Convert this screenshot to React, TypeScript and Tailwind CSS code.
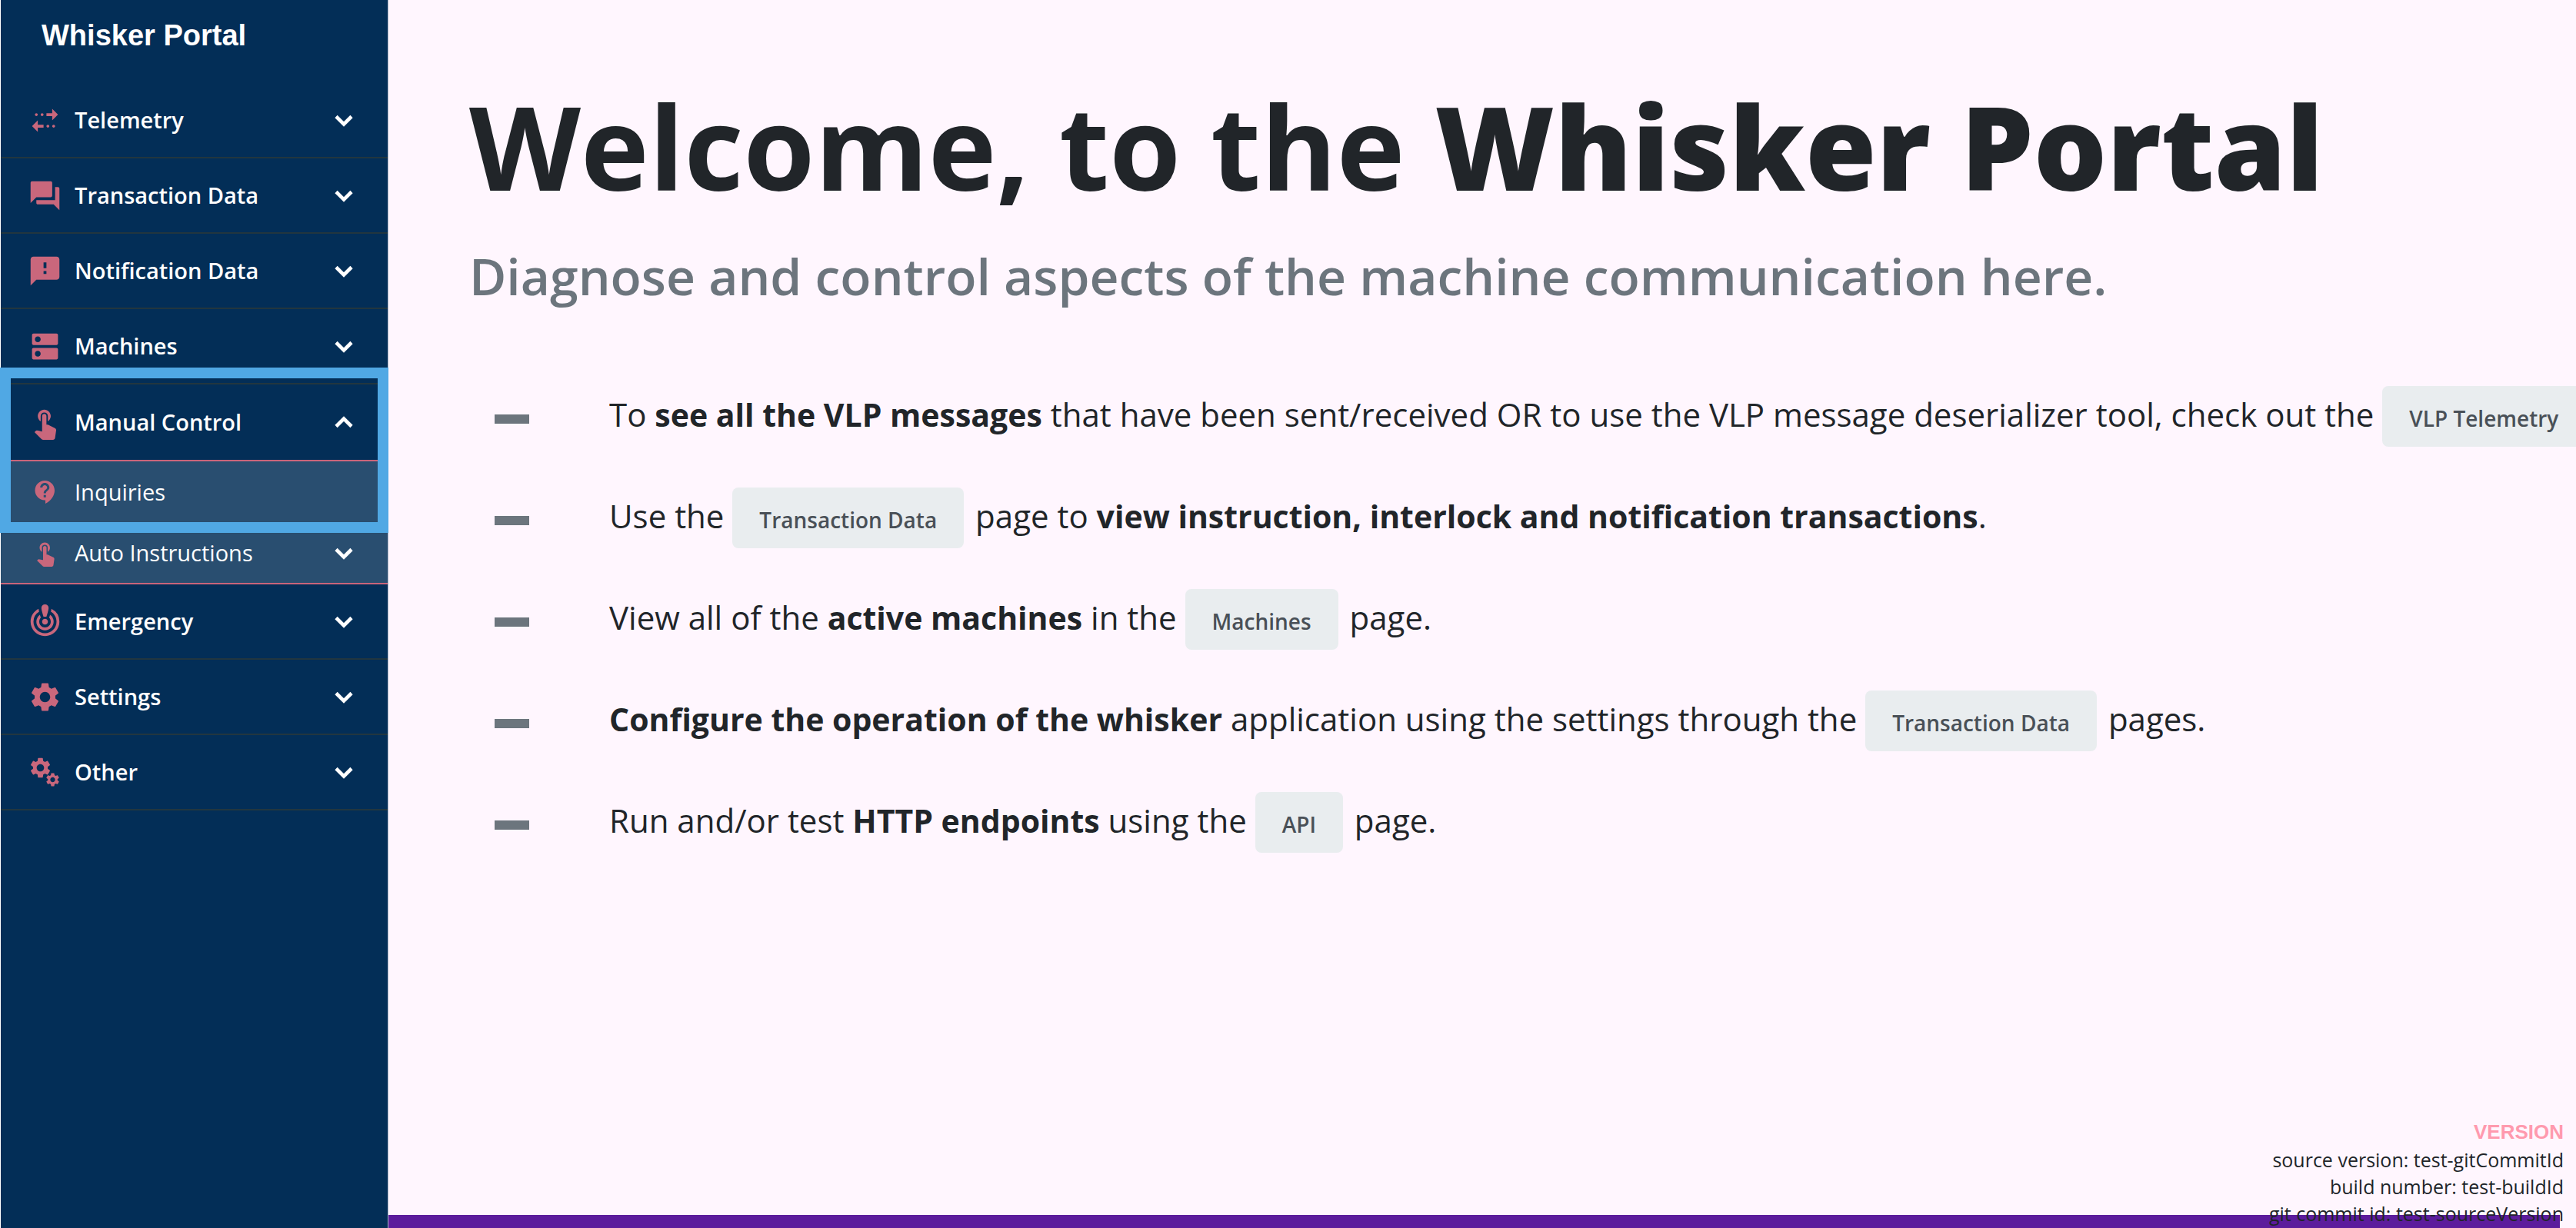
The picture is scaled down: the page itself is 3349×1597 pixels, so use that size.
import type { ReactNode } from "react";
import type { IconType } from "react-icons";
import {
  MdMultipleStop,
  MdForum,
  MdFeedback,
  MdDns,
  MdTouchApp,
  MdContactSupport,
  MdCrisisAlert,
  MdSettings,
} from "react-icons/md";

function Gears() {
  return (
    <svg viewBox="0 0 45 45" className="size-[45px]" aria-hidden="true">
      <MdSettings x="0.5" y="0.5" size={32} />
      <MdSettings x="22" y="21.5" size={21} />
    </svg>
  );
}

function Chevron({ up = false }: { up?: boolean }) {
  return (
    <svg viewBox="0 0 46 46" className="size-[46px]" fill="none" stroke="currentColor" strokeWidth="4.6" aria-hidden="true">
      <path d={up ? "M13 28.5 L23 18.5 L33 28.5" : "M13 18.5 L23 28.5 L33 18.5"} />
    </svg>
  );
}

function NavRow({
  icon: Icon,
  label,
  open = false,
}: {
  icon: IconType | (() => ReactNode);
  label: string;
  open?: boolean;
}) {
  return (
    <button
      type="button"
      aria-expanded={open}
      className={
        open
          ? "flex h-[98px] w-full items-center pr-[34px] pl-[35px] text-left"
          : "flex h-[98px] w-full items-center border-b-2 border-[#22363f] pr-[34px] pl-[35px] text-left"
      }
    >
      <span className="w-[45px] text-[45px] text-[#c9677c]">
        <Icon />
      </span>
      <span className="ml-4 flex-1 text-[29px] font-semibold">{label}</span>
      <Chevron up={open} />
    </button>
  );
}

function SubRow({ icon: Icon, label, chevron = false }: { icon: IconType; label: string; chevron?: boolean }) {
  const inner = (
    <>
      <span className="flex w-[45px] justify-center text-[36px] text-[#c9677c]">
        <Icon />
      </span>
      <span className="ml-4 flex-1 text-[29px]">{label}</span>
      {chevron && <Chevron />}
    </>
  );
  return chevron ? (
    <button type="button" aria-expanded={false} className="flex h-[79px] w-full items-center pr-[34px] pl-[35px] text-left">
      {inner}
    </button>
  ) : (
    <a href="#inquiries" className="flex h-[79px] w-full items-center pr-[34px] pl-[35px]">
      {inner}
    </a>
  );
}

function PageButton({ children }: { children: ReactNode }) {
  return (
    <button
      type="button"
      className="mr-1 inline-block rounded-lg bg-[#e9edef] px-[35px] pt-[21px] pb-4 align-baseline text-[28px] leading-[42px] font-semibold text-[#495057]"
    >
      {children}
    </button>
  );
}

function Bold({ children }: { children: ReactNode }) {
  return <strong className="text-[41px] font-bold">{children}</strong>;
}

function Item({ children }: { children: ReactNode }) {
  return (
    <li className="flex h-[132px] items-start">
      <span className="mt-10 mr-[104px] ml-8 h-3 w-[45px] shrink-0 bg-[#6c757d]" />
      <p className="text-[42px] leading-[79px] whitespace-nowrap">{children}</p>
    </li>
  );
}

export default function App() {
  return (
    <div className="relative flex min-h-screen overflow-hidden bg-[#fff6fe] font-['Open_Sans',sans-serif] text-[#212529]">
      <aside className="w-[505px] shrink-0 border-r border-l border-r-[#a9b4c8] border-l-white bg-[#032e57] text-white">
        <div className="mb-4 flex h-[92px] items-center pl-[53px] font-['Liberation_Sans',sans-serif] text-[38px] font-bold">
          Whisker Portal
        </div>
        <nav>
          <NavRow icon={MdMultipleStop} label="Telemetry" />
          <NavRow icon={MdForum} label="Transaction Data" />
          <NavRow icon={MdFeedback} label="Notification Data" />
          <NavRow icon={MdDns} label="Machines" />
          <div className="relative">
            <NavRow icon={MdTouchApp} label="Manual Control" open />
            <div className="border-y-2 border-[#c9647a] bg-[#294e70]">
              <SubRow icon={MdContactSupport} label="Inquiries" />
              <SubRow icon={MdTouchApp} label="Auto Instructions" chevron />
            </div>
            <div className="pointer-events-none absolute -inset-x-px -top-[22px] h-[215px] border-[14px] border-[#50a8e4]" />
          </div>
          <NavRow icon={MdCrisisAlert} label="Emergency" />
          <NavRow icon={MdSettings} label="Settings" />
          <NavRow icon={Gears} label="Other" />
        </nav>
      </aside>

      <div className="flex min-w-0 flex-1 flex-col">
        <main className="flex-1 pt-[100px] pl-[105px]">
          <h1 className="text-[150px] leading-[180px] font-bold whitespace-nowrap">
            Welcome, to the <span className="font-extrabold">Whisker Portal</span>
          </h1>
          <h2 className="mt-[38px] text-[66px] leading-[80px] font-semibold whitespace-nowrap text-[#6c757d]">
            Diagnose and control aspects of the machine communication here.
          </h2>
          <ul className="mt-[101px] ml-px">
            <Item>
              To <Bold>see all the VLP messages</Bold> that have been sent/received OR to use the VLP message
              deserializer tool, check out the <PageButton>VLP Telemetry</PageButton>
            </Item>
            <Item>
              Use the <PageButton>Transaction Data</PageButton> page to{" "}
              <Bold>view instruction, interlock and notification transactions</Bold>.
            </Item>
            <Item>
              View all of the <Bold>active machines</Bold> in the <PageButton>Machines</PageButton> page.
            </Item>
            <Item>
              <Bold>Configure the operation of the whisker</Bold> application using the settings through the{" "}
              <PageButton>Transaction Data</PageButton> pages.
            </Item>
            <Item>
              Run and/or test <Bold>HTTP endpoints</Bold> using the <PageButton>API</PageButton> page.
            </Item>
          </ul>
        </main>
        <div className="mr-[21px] h-[17px] bg-[#5c1c9c]" />
      </div>

      <footer className="absolute right-4 bottom-px text-right text-[25px] leading-[35px]">
        <div className="font-['Liberation_Sans',sans-serif] text-[26px] leading-[38px] font-bold text-[#ff9aae]">
          VERSION
        </div>
        <div>source version: test-gitCommitId</div>
        <div>build number: test-buildId</div>
        <div>git commit id: test-sourceVersion</div>
      </footer>
    </div>
  );
}
